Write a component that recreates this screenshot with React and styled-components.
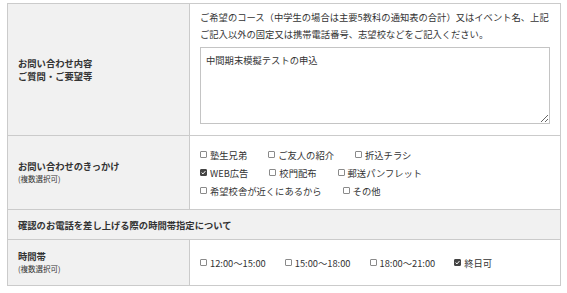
import React from "react"
import styled, { createGlobalStyle } from "styled-components"

const GlobalStyle = createGlobalStyle`
  body {
    margin: 0;
    padding: 3px 6px 0 7px;
    background: #fff;
    font-family: "Noto Sans CJK JP", "Noto Sans", sans-serif;
    color: #333;
  }
`

const FormTable = styled.table`
  width: 554px;
  border-collapse: collapse;
  table-layout: fixed;
  font-size: 9.3px;

  th,
  td {
    border: 1px solid #cbcbcb;
  }
`

const LabelCell = styled.th`
  width: 182px;
  background: #f1f1f1;
  text-align: left;
  vertical-align: middle;
  font-weight: bold;
  padding: 0 10px;
  height: ${p => p.$h}px;
  line-height: 13px;
  box-sizing: border-box;
`

const HeadCell = styled.th`
  background: #f1f1f1;
  text-align: left;
  font-weight: bold;
  padding: 0 10px;
  height: 30px;
  box-sizing: border-box;
`

const Note = styled.span`
  display: block;
  font-size: 7.5px;
  font-weight: normal;
  line-height: 12px;
`

const FieldCell = styled.td`
  padding: ${p => p.$pad || "0 10px"};
  vertical-align: middle;
  background: #fff;
`

const Help = styled.p`
  margin: 0 0 4px;
  line-height: 17px;
`

const Memo = styled.textarea`
  display: block;
  width: 100%;
  height: 77px;
  box-sizing: border-box;
  border: 1px solid #c4c4c4;
  border-radius: 0;
  padding: 5px 5px;
  font: inherit;
  font-size: 9.3px;
  color: #333;
  resize: vertical;
  outline: none;
`

const Options = styled.div`
  display: flex;
  flex-wrap: wrap;
  column-gap: 19px;
  line-height: 18px;
`

const Line = styled.div`
  display: flex;
  column-gap: 21px;
  line-height: 18px;
`

const Option = styled.label`
  display: inline-flex;
  align-items: center;
  gap: 3px;
  white-space: nowrap;
`

const Box = styled.span`
  width: 7px;
  height: 7px;
  box-sizing: border-box;
  border: 1px solid ${p => (p.$on ? "#444" : "#8a8a8a")};
  border-radius: 1px;
  background: ${p => (p.$on ? "#444" : "#fff")};
  display: inline-flex;
  align-items: center;
  justify-content: center;
`

const Check = ({ on, children }) => (
  <Option>
    <Box $on={on}>
      {on && (
        <svg width="5" height="5" viewBox="0 0 5 5">
          <path d="M0.6 2.6 L2 3.9 L4.4 1.1" fill="none" stroke="#fff" strokeWidth="1" />
        </svg>
      )}
    </Box>
    {children}
  </Option>
)

export default function App() {
  return (
    <>
      <GlobalStyle />
      <FormTable>
        <tbody>
          <tr>
            <LabelCell $h={132}>
              お問い合わせ内容
              <br />
              ご質問・ご要望等
            </LabelCell>
            <FieldCell $pad="4px 10px 11px">
              <Help>
                ご希望のコース（中学生の場合は主要5教科の通知表の合計）又はイベント名、上記ご記入以外の固定又は携帯電話番号、志望校などをご記入ください。
              </Help>
              <Memo defaultValue="中間期末模擬テストの申込" />
            </FieldCell>
          </tr>
          <tr>
            <LabelCell $h={74}>
              お問い合わせのきっかけ
              <Note>(複数選択可)</Note>
            </LabelCell>
            <FieldCell>
              <Line>
                <Check>塾生兄弟</Check>
                <Check>ご友人の紹介</Check>
                <Check>折込チラシ</Check>
              </Line>
              <Line>
                <Check on>WEB広告</Check>
                <Check>校門配布</Check>
                <Check>郵送パンフレット</Check>
              </Line>
              <Line>
                <Check>希望校舎が近くにあるから</Check>
                <Check>その他</Check>
              </Line>
            </FieldCell>
          </tr>
          <tr>
            <HeadCell colSpan={2}>確認のお電話を差し上げる際の時間帯指定について</HeadCell>
          </tr>
          <tr>
            <LabelCell $h={46}>
              時間帯
              <Note>(複数選択可)</Note>
            </LabelCell>
            <FieldCell>
              <Options>
                <Check>12:00〜15:00</Check>
                <Check>15:00〜18:00</Check>
                <Check>18:00〜21:00</Check>
                <Check on>終日可</Check>
              </Options>
            </FieldCell>
          </tr>
        </tbody>
      </FormTable>
    </>
  )
}
